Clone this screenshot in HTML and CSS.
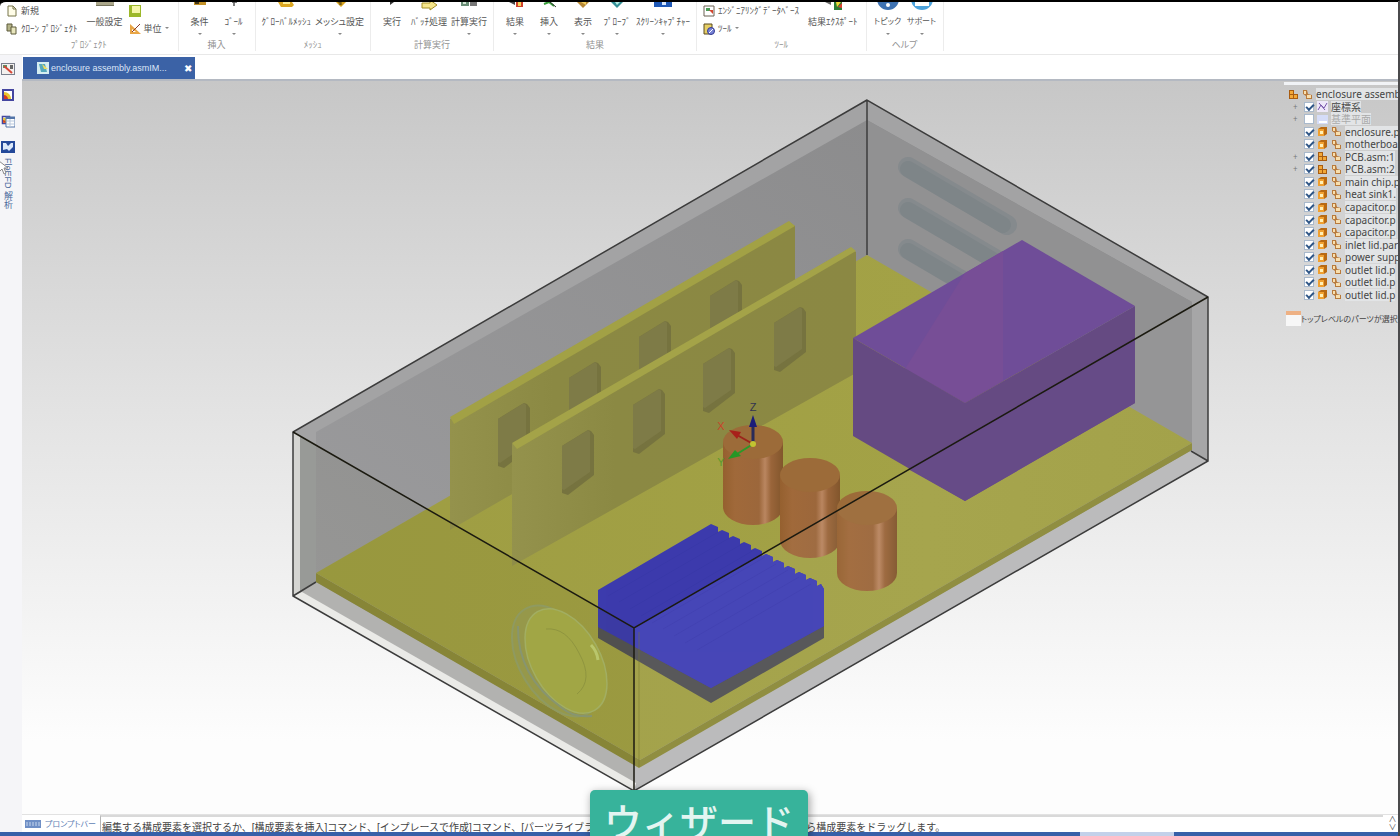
FILE: index.html
```
<!DOCTYPE html>
<html lang="ja">
<head>
  <meta charset="UTF-8">
  <meta name="viewport" content="width=device-width, initial-scale=1.0">
  <title>enclosure assembly</title>
  <link rel="stylesheet" href="styles.css">
</head>
<body>
  <svg class="defs" aria-hidden="true">
    <symbol id="part" viewBox="0 0 11 11"><path d="M1 3l3-2h6v7l-3 2H1z" fill="#b96a12"/><path d="M1 3h6v7H1z" fill="#f0a030"/><path d="M3 5h3v3H3z" fill="#fff0b8"/></symbol>
    <symbol id="asm" viewBox="0 0 11 11"><path d="M1 1h5v4h4v5H1z" fill="#a85c10"/><path d="M2 2h3v3H2zM2 6h3v3H2zM6 6h3v3H6z" fill="#f2a838"/></symbol>
    <symbol id="link" viewBox="0 0 11 11"><path d="M1 1h4l1 4 4 1v4H4V7L1 5z" fill="#b87a3c"/><path d="M2 2h2v3H2zM5 6h4v3H5z" fill="#f8dfae"/></symbol>
    <symbol id="chart" viewBox="0 0 14 14"><path d="M1 1h12v12H1z" fill="#4546a0"/><path d="M3 3h8v8H3z" fill="#fff"/><path d="M3 11V4c4 0 7 3 7 7z" fill="#e8c52c"/><path d="M3 11V7c2 0 4 2 4 4z" fill="#d33a22"/></symbol>
  </svg>

  <div class="app">
    <header class="ribbon">
      <section class="group">
        <div class="tools">
          <div class="stack">
            <button><svg class="icon" viewBox="0 0 12 12"><path d="M2 1h5l3 3v7H2z" fill="#fffde8" stroke="#77754a"/><path d="M7 1v3h3" fill="none" stroke="#77754a"/></svg>新規</button>
            <button><svg class="icon" viewBox="0 0 12 12"><path d="M1 1h5v7H1z" fill="#b5b489" stroke="#5c5b3b"/><path d="M5 4h5v7H5z" fill="#e8e6bd" stroke="#5c5b3b"/></svg>ｸﾛｰﾝ ﾌﾟﾛｼﾞｪｸﾄ</button>
          </div>
          <button class="big"><svg class="cut" viewBox="0 0 18 9"><path d="M0 0h18v4H0z" fill="#aaa68a"/><path d="M0 3h18v1H0z" fill="#77745d"/></svg>一般設定</button>
          <div class="stack">
            <button aria-label="表示"><svg class="icon" viewBox="0 0 12 12"><path d="M0 0h12v12H0z" fill="#9cb82a"/><path d="M3 1h8v7H3z" fill="#f4f6a8"/></svg></button>
            <button><svg class="icon" viewBox="0 0 12 12"><path d="M1 1v10h11z" fill="#e9a646"/><path d="M3 6v3h4z" fill="#fff"/><path d="M3 9l8-8" stroke="#8a3c2a"/></svg>単位<i class="arrow"></i></button>
          </div>
        </div>
        <h2>ﾌﾟﾛｼﾞｪｸﾄ</h2>
      </section>

      <section class="group">
        <div class="tools">
          <button class="big menu"><svg class="cut" viewBox="0 0 18 9"><path d="M3 0h12v3H3z" fill="#c39127"/><path d="M4 0h4v2H4z" fill="#443818"/></svg>条件</button>
          <button class="big menu"><svg class="cut" viewBox="0 0 18 9"><path d="M9 0v4M7 0h5" stroke="#555" stroke-width="1.5"/></svg>ｺﾞｰﾙ</button>
        </div>
        <h2>挿入</h2>
      </section>

      <section class="group">
        <div class="tools">
          <button class="big"><svg class="cut" viewBox="0 0 18 9"><path d="M1 0h14l2 3-2 2H4z" fill="#dca722"/><path d="M6 0h7v2H6z" fill="#fff09a"/></svg>ｸﾞﾛｰﾊﾞﾙﾒｯｼｭ</button>
          <button class="big menu"><svg class="cut" viewBox="0 0 18 9"><path d="M5 0h10l-5 5z" fill="#d4a01c"/><path d="M7 0h2v3M10 0v3" stroke="#574816" fill="none"/></svg>メッシュ設定</button>
        </div>
        <h2>ﾒｯｼｭ</h2>
      </section>

      <section class="group">
        <div class="tools">
          <button class="big"><svg class="cut" viewBox="0 0 18 9"><path d="M7 0h4L7 3z" fill="#333"/></svg>実行</button>
          <button class="big"><svg class="cut" viewBox="0 0 18 9"><path d="M2 1h8v-3l7 5-7 5V6H2z" fill="#f6e68c" stroke="#a38f27"/></svg>ﾊﾞｯﾁ処理</button>
          <button class="big menu"><svg class="cut" viewBox="0 0 18 9"><path d="M1 0h8v4H1z" fill="#698d76"/><path d="M10 0h7v4h-7z" fill="#777"/><path d="M3 0h3v2H3z" fill="#d4e4d4"/></svg>計算実行</button>
        </div>
        <h2>計算実行</h2>
      </section>

      <section class="group">
        <div class="tools">
          <button class="big menu"><svg class="cut" viewBox="0 0 18 9"><path d="M3 0h6v3z" fill="#444"/><path d="M10 0h7v5h-7z" fill="#cf402a"/><path d="M12 0h3v4h-3z" fill="#f4d25a"/></svg>結果</button>
          <button class="big menu"><svg class="cut" viewBox="0 0 18 9"><path d="M4 2l5-2 5 4" stroke="#379d39" stroke-width="2" fill="none"/><path d="M10 0l6 5" stroke="#333"/></svg>挿入</button>
          <button class="big menu"><svg class="cut" viewBox="0 0 18 9"><path d="M3 0h12l-6 6z" fill="#b68735"/><path d="M7 0h5v3z" fill="#f2cf60"/></svg>表示</button>
          <button class="big menu"><svg class="cut" viewBox="0 0 18 9"><path d="M3 0h12l-6 6z" fill="#348f96"/><path d="M7 0h5L9 3z" fill="#b9eee6"/></svg>ﾌﾟﾛｰﾌﾞ</button>
          <button class="big menu"><svg class="cut" viewBox="0 0 18 9"><path d="M0 0h18v5H0z" fill="#1e58b6"/><path d="M8 0h4v3H8z" fill="#d8e8ff"/></svg>ｽｸﾘｰﾝｷｬﾌﾟﾁｬｰ</button>
        </div>
        <h2>結果</h2>
      </section>

      <section class="group">
        <div class="tools">
          <div class="stack">
            <button><svg class="icon" viewBox="0 0 12 12"><path d="M1 1h10v10H1z" fill="#fff" stroke="#6b6152"/><path d="M3 3h4v3H3z" fill="#4a9b56"/><path d="M6 5h4v4z" fill="#d4442e"/></svg>ｴﾝｼﾞﾆｱﾘﾝｸﾞﾃﾞｰﾀﾍﾞｰｽ</button>
            <button><svg class="icon" viewBox="0 0 12 12"><path d="M1 1h8v10H1z" fill="#e6cf66" stroke="#5a4b1e"/><circle cx="8" cy="8" r="3.5" fill="#7883d6" stroke="#353b94"/><path d="M6 10l4-4" stroke="#fff"/></svg>ﾂｰﾙ<i class="arrow"></i></button>
          </div>
          <button class="big"><svg class="cut" viewBox="0 0 18 9"><path d="M1 0h6v3z" fill="#666"/><path d="M10 0h9v8h-9z" fill="#2b7b35"/><path d="M12 0h5l-4 5z" fill="#f0da36"/><path d="M14 5l4-4v5z" fill="#db432d"/></svg>結果ｴｸｽﾎﾟｰﾄ</button>
        </div>
        <h2>ﾂｰﾙ</h2>
      </section>

      <section class="group help">
        <div class="tools">
          <button class="big menu"><svg class="cut wide" viewBox="0 0 24 9"><circle cx="12" cy="-3" r="11" fill="#3e72b2"/><circle cx="12" cy="3" r="2" fill="#fff"/></svg>トピック</button>
          <button class="big menu"><svg class="cut wide" viewBox="0 0 24 9"><circle cx="12" cy="-3" r="11" fill="#4ba2dc"/><path d="M5 0h14v4H5z" fill="#fff"/></svg>サポート</button>
        </div>
        <h2>ヘルプ</h2>
      </section>
    </header>

    <div class="work">
      <nav class="dock">
        <button aria-label="モデル"><svg viewBox="0 0 14 14"><path d="M0 1h14v12H0z" fill="#7a7f8c"/><path d="M1 2h12v10H1z" fill="#f3f0ee"/><path d="M2 3h4v3H2z" fill="#4d9a6a"/><path d="M3 4l8 7" stroke="#d64637" stroke-width="2"/><path d="M9 3h3v4H9z" fill="#666"/></svg></button>
        <button aria-label="結果"><svg viewBox="0 0 14 14"><use href="#chart"/></svg></button>
        <button aria-label="一覧"><svg viewBox="0 0 14 14"><use href="#chart" width="10" height="12"/><path d="M5 3h9v10H5z" fill="#fff" stroke="#5274a8"/><path d="M5 4h9" stroke="#5274a8" stroke-width="2"/><path d="M6 7h7M6 10h7M9 5v8" stroke="#b9c8dd"/></svg></button>
        <button aria-label="解析"><svg viewBox="0 0 14 14"><path d="M0 1h14v12H0z" fill="#24499a"/><path d="M2 3h3l2 3 3-3h2v4L8 11l-2-2-4 1z" fill="#dbe8fa"/></svg></button>
        <a href="#">FloEFD 解析</a>
        <svg class="cursor" viewBox="0 0 10 15"><path d="M1 1v11l3-3 2 5 2-1-2-5h4z" fill="#fff" stroke="#888"/></svg>
      </nav>

      <main class="document">
        <div class="tabs">
          <div class="tab">
            <svg viewBox="0 0 12 12"><path d="M0 0h12v12H0z" fill="#d5edf1"/><path d="M2 2h6l2 8H4z" fill="#56a9bd"/><path d="M5 2l6 5H7z" fill="#eedb63"/></svg>
            <span>enclosure assembly.asmIM...</span>
            <button aria-label="閉じる">✖</button>
          </div>
        </div>

        <div class="view">
          <svg class="scene" viewBox="22 81 1376 733" role="img" aria-label="enclosure assembly">
            <defs>
              <linearGradient id="wall" x1="1" x2="0" y1="0" y2="1"><stop offset="0" stop-color="#888889"/><stop offset="1" stop-color="#9e9ea0"/></linearGradient>
              <linearGradient id="base" x1="0" x2="1"><stop offset="0" stop-color="#9e9d42"/><stop offset=".7" stop-color="#a3a246"/><stop offset="1" stop-color="#a09f43"/></linearGradient>
              <linearGradient id="pcb" x1="0" x2="1"><stop offset="0" stop-color="#94924c"/><stop offset=".3" stop-color="#8b8943"/><stop offset="1" stop-color="#8b8843"/></linearGradient>
              <linearGradient id="copper" x1="0" x2="1"><stop offset="0" stop-color="#95602f"/><stop offset=".2" stop-color="#a0693a"/><stop offset=".6" stop-color="#9c673b"/><stop offset=".7" stop-color="#ba8660"/><stop offset=".8" stop-color="#9a653a"/><stop offset="1" stop-color="#82562c"/></linearGradient>
              <clipPath id="sink"><path d="M598 590L711 524l7 3 0 5 4-2 7 3 0 5 4-2 7 3 0 5 4-2 7 3 0 5 4-2 7 3 0 5 4-2 7 3 0 5 4-2 7 3 0 5 4-2 7 3 0 5 4-2 7 3 0 5 4-2 7 3 0 5 4-2 3 5V626L711 688L598 627z"/></clipPath>
              <g id="chip"><path d="M562 446l26-16 3 1 3 4v40l-26 20-6-2z" fill="#76733f"/><path d="M562 446l26-16 2 2v40l-26 18-2-1z" fill="#7e7b47"/></g>
              <g id="can"><path d="M723 442v65a30 18 0 0 0 60 0v-65z" fill="url(#copper)"/><ellipse cx="753" cy="442" rx="30" ry="17" fill="#9c6b39"/></g>
              <g id="slot"><path d="M908 167l99 58" stroke="#858a8d" stroke-width="20" stroke-linecap="round"/><path d="M908 169l95 56" stroke="#7e8588" stroke-width="16" stroke-linecap="round"/></g>
            </defs>

            <!-- enclosure shell -->
            <path d="M867 100L293 432V596L634 791L1208 461V297z" fill="#a3a3a4"/>
            <path d="M867 120L316 432V582L639 767L1192 450V302z" fill="url(#wall)"/>
            <path d="M867 120V264L1192 450V302z" fill="#919192"/>
            <path d="M293 432l7 4v160l-7 0z" fill="#dedede"/>
            <path d="M300 436l16 9v138l-16 9z" fill="#9da0a0"/>
            <path d="M293 596L316 582L639 767L1192 450L1208 461L634 791z" fill="#b9b9ba"/>
            <path d="M293 596l9-4l334 191l-2 8z" fill="#f4f4f4"/>
            <use href="#slot"/><use href="#slot" y="41"/><use href="#slot" y="82"/>

            <!-- motherboard -->
            <path d="M316 573L640 760L1192 443V450L639 768L316 582z" fill="#8c8a3a"/>
            <path d="M867 255L316 573L640 760L1192 443z" fill="url(#base)"/>

            <!-- pcb 1 and 2 -->
            <path d="M450 419L789 222L795 226V330L450 530z" fill="url(#pcb)"/>
            <path d="M450 417L789 221L795 226L454 424z" fill="#a2a145"/>
            <g transform="translate(-64 -27)"><use href="#chip"/><use href="#chip" x="71" y="-41"/><use href="#chip" x="141" y="-82"/><use href="#chip" x="212" y="-123"/></g>
            <path d="M512 444L850 248L856 252V373L512 566z" fill="url(#pcb)"/>
            <path d="M512 443L851 247L856 251L517 449z" fill="#a4a348"/>
            <use href="#chip"/><use href="#chip" x="71" y="-41"/><use href="#chip" x="141" y="-82"/><use href="#chip" x="212" y="-123"/>

            <!-- power supply -->
            <path d="M853 338L1022 240L1135 306L965 403z" fill="#6f4d98"/>
            <path d="M1003 251L1003 381L965 403L905 369L965 273z" fill="#774e96"/>
            <path d="M853 338L965 403L1135 306V403L965 501L853 436z" fill="#654a82"/>
            <path d="M1135 339V403L965 501L908 469z" fill="#604483"/>

            <!-- capacitors -->
            <use href="#can"/><use href="#can" x="57" y="33"/><use href="#can" x="114" y="66"/>

            <!-- main chip and heat sink -->
            <path d="M598 626L711 686L824 624V638L711 703L598 638z" fill="#525254"/>
            <g clip-path="url(#sink)">
              <path d="M590 520h240v170H590z" fill="#3c3bad"/>
              <path d="M634 628L840 509V690H634z" fill="#403fb5"/>
              <path d="M720 531l-112 65M731 537l-112 65M742 544l-112 65M754 550l-113 66M765 557l-113 66M776 564l-113 65M788 570l-114 66M799 577l-114 66M811 584l-114 66" stroke="#3635a2" opacity=".35"/>
            </g>

            <!-- front faces -->
            <path d="M293 432L634 628V791L293 596z" fill="#3d3d00" opacity=".05"/>
            <path d="M634 628L1208 297V461L634 791z" fill="#fff" opacity=".04"/>

            <!-- inlet lid -->
            <ellipse cx="557" cy="661" rx="61" ry="37" transform="rotate(58 557 661)" fill="#96984a" stroke="#8f9a60" stroke-width="2"/>
            <ellipse cx="566" cy="661" rx="57" ry="34" transform="rotate(60 566 661)" fill="#a1a645" stroke="#a2ae62" stroke-width="1.5"/>
            <path d="M518 626q-1 50 44 82q12 10 30 8" fill="none" stroke="#879570" stroke-width="2"/>
            <path d="M546 629q20-2 33 24q15 27-2 41" fill="none" stroke="#8f953f"/>
            <path d="M591 645q6 6 7 15" fill="none" stroke="#b9c66c" stroke-width="3"/>

            <!-- edges -->
            <path d="M867 100L293 432V596L634 791L1208 461V297zM867 100V255M293 596l23-14M1208 461l-17-10" fill="none" stroke="#3c3c3c" stroke-width="1.5"/>
            <path d="M293 432L634 628L1208 297M634 628V791" fill="none" stroke="#1b1a10" stroke-width="1.5"/>
            <path d="M639 632V767" stroke="#77762f" opacity=".5"/>

            <!-- axes -->
            <path d="M753 444V424" stroke="#292b59" stroke-width="3"/><path d="M749 427l4-12 4 12z" fill="#1c1d7a"/>
            <path d="M753 444l-16-9" stroke="#9c231b" stroke-width="2"/><path d="M729 430l12 2-4 7z" fill="#a8201a"/>
            <path d="M753 444l-16 10" stroke="#2a9929" stroke-width="2"/><path d="M728 459l7-9 6 6z" fill="#259726"/>
            <circle cx="753" cy="444" r="3" fill="#c2c331"/>
            <text class="axis" x="753" y="411" fill="#33344f">Z</text>
            <text class="axis" x="721" y="430" fill="#c8442a">X</text>
            <text class="axis" x="721" y="466" fill="#5a9a2b">Y</text>
          </svg>

          <aside class="tree">
            <ul>
              <li class="root"><svg><use href="#asm"/></svg><svg><use href="#link"/></svg><span>enclosure assemb</span></li>
              <li><button aria-label="展開">+</button><label><input type="checkbox" checked><svg viewBox="0 0 11 11"><path d="M0 0h11v11H0z" fill="#eee8fa"/><path d="M1 9l3-5 3 3 3-5M2 2l6 7" stroke="#7755aa" fill="none"/></svg><span>座標系</span></label></li>
              <li class="off"><button aria-label="展開">+</button><label><input type="checkbox"><svg viewBox="0 0 11 11"><path d="M0 1h11v9H0z" fill="#d5dcf8"/><path d="M2 7h8v2H2z" fill="#fff"/></svg><span>基準平面</span></label></li>
              <li><label><input type="checkbox" checked><svg><use href="#part"/></svg><svg><use href="#link"/></svg><span>enclosure.p</span></label></li>
              <li><label><input type="checkbox" checked><svg><use href="#part"/></svg><svg><use href="#link"/></svg><span>motherboa</span></label></li>
              <li><button aria-label="展開">+</button><label><input type="checkbox" checked><svg><use href="#asm"/></svg><svg><use href="#link"/></svg><span>PCB.asm:1</span></label></li>
              <li><button aria-label="展開">+</button><label><input type="checkbox" checked><svg><use href="#asm"/></svg><svg><use href="#link"/></svg><span>PCB.asm:2</span></label></li>
              <li><label><input type="checkbox" checked><svg><use href="#part"/></svg><svg><use href="#link"/></svg><span>main chip.p</span></label></li>
              <li><label><input type="checkbox" checked><svg><use href="#part"/></svg><svg><use href="#link"/></svg><span>heat sink1.</span></label></li>
              <li><label><input type="checkbox" checked><svg><use href="#part"/></svg><svg><use href="#link"/></svg><span>capacitor.p</span></label></li>
              <li><label><input type="checkbox" checked><svg><use href="#part"/></svg><svg><use href="#link"/></svg><span>capacitor.p</span></label></li>
              <li><label><input type="checkbox" checked><svg><use href="#part"/></svg><svg><use href="#link"/></svg><span>capacitor.p</span></label></li>
              <li><label><input type="checkbox" checked><svg><use href="#part"/></svg><svg><use href="#link"/></svg><span>inlet lid.par</span></label></li>
              <li><label><input type="checkbox" checked><svg><use href="#part"/></svg><svg><use href="#link"/></svg><span>power supp</span></label></li>
              <li><label><input type="checkbox" checked><svg><use href="#part"/></svg><svg><use href="#link"/></svg><span>outlet lid.p</span></label></li>
              <li><label><input type="checkbox" checked><svg><use href="#part"/></svg><svg><use href="#link"/></svg><span>outlet lid.p</span></label></li>
              <li><label><input type="checkbox" checked><svg><use href="#part"/></svg><svg><use href="#link"/></svg><span>outlet lid.p</span></label></li>
            </ul>
            <p><svg viewBox="0 0 15 15"><path d="M0 0h15v15H0z" fill="#f7f7f7"/><path d="M0 0h15v4H0z" fill="#eeb184"/></svg>トップレベルのパーツが選択</p>
          </aside>
        </div>

        <div class="prompt">
          <svg viewBox="0 0 16 8"><path d="M0 0h16v8H0z" fill="#6f8fc6"/><path d="M1 3h14M1 5h14" stroke="#c9d8ef" stroke-dasharray="2 1"/></svg>
          <label for="prompt">プロンプトバー</label>
          <input id="prompt" type="text" readonly value="編集する構成要素を選択するか、[構成要素を挿入]コマンド、[インプレースで作成]コマンド、[パーツライブラリ]コマンドを使用するか、パーツウィンドウから構成要素をドラッグします。">
          <div class="spin"><button aria-label="上">∧</button><button aria-label="下">∨</button></div>
        </div>
      </main>
    </div>
    <footer class="taskbar"><span></span></footer>
    <div class="caption">ウィザード</div>
  </div>
</body>
</html>
```
FILE: styles.css
```
*{
  box-sizing: border-box;
}
body{
  margin: 0;
  background-color: #000;
  color: #555;
  font-family: "Liberation Sans", "Noto Sans CJK JP", sans-serif;
  font-size: 9px;
}
button{
  border: none;
  padding: 0;
  background-color: transparent;
  color: inherit;
  font: inherit;
  cursor: pointer;
}
svg{
  display: block;
  flex: none;
}
.defs{
  position: absolute;
  width: 0;
  height: 0;
}
.app{
  position: relative;
  display: flex;
  flex-direction: column;
  height: 100vh;
  border-top: 2px solid #000;
  border-right: 2px solid #4a4a4c;
  border-radius: 6px 0 0 0;
  background-color: #fff;
  overflow: hidden;
}

/* ribbon */
.ribbon{
  display: flex;
  height: 53px;
  border-bottom: 1px solid #e8e8e8;
  font-feature-settings: "palt";
}
.group{
  display: flex;
  flex-direction: column;
  justify-content: space-between;
  height: 49px;
  padding: 0 4px;
  border-right: 1px solid #ececec;
}
.group h2{
  margin: 0;
  color: #929292;
  font-size: 9px;
  font-weight: normal;
  line-height: 12px;
  text-align: center;
}
.tools{
  display: flex;
}
.stack{
  display: flex;
  flex-direction: column;
  gap: 6px;
  padding: 3px 5px 2px 2px;
}
.stack button{
  display: flex;
  align-items: center;
  gap: 3px;
  height: 12px;
  line-height: 12px;
  white-space: nowrap;
}
.icon{
  width: 12px;
  height: 12px;
}
.big{
  display: flex;
  flex-direction: column;
  align-items: center;
  gap: 5px;
  min-width: 34px;
  padding: 0 2px;
  line-height: 12px;
  white-space: nowrap;
}
.stack + .big{
  padding: 0 4px;
}
.help{
  font-size: 8px;
}
.help .big{
  font-size: 8px;
}
.menu::after, .arrow{
  content: "";
  border: 2px solid transparent;
  border-top-color: #888;
}
.cut{
  width: 18px;
  height: 9px;
}
.wide{
  width: 24px;
}

/* left dock */
.work{
  display: flex;
  flex: 1;
  min-height: 0;
}
.dock{
  position: relative;
  display: flex;
  flex-direction: column;
  align-items: flex-start;
  gap: 12px;
  width: 22px;
  padding-top: 7px;
  padding-left: 1px;
  background-color: #f5f5f8;
}
.dock button svg{
  width: 14px;
  height: 14px;
}
.dock a{
  margin-top: -8px;
  color: #4c6a9c;
  font-size: 9px;
  line-height: 14px;
  text-decoration: none;
  writing-mode: vertical-rl;
}
.cursor{
  position: absolute;
  top: 105px;
  left: -2px;
  width: 10px;
  height: 15px;
}

/* document */
.document{
  display: flex;
  flex: 1;
  flex-direction: column;
  min-width: 0;
}
.tabs{
  padding: 2px 1px 0;
  border-bottom: 2px solid #b4b9c2;
}
.tab{
  display: flex;
  align-items: center;
  gap: 2px;
  width: 172px;
  height: 22px;
  padding: 0 3px 0 14px;
  background-color: #3b62a6;
  color: #dbe6f7;
}
.tab svg{
  width: 12px;
  height: 12px;
}
.tab span{
  flex: 1;
  white-space: nowrap;
}
.tab button{
  color: #fff;
  font-size: 10px;
}
.view{
  position: relative;
  flex: 1;
  min-height: 0;
  background: linear-gradient(#c7c7c7, #e3e3e3 45%, #fdfdfd 90%);
  overflow: hidden;
}
.scene{
  width: 100%;
  height: 100%;
}
.axis{
  font-size: 11px;
  text-anchor: middle;
}

/* part tree */
.tree{
  position: absolute;
  top: 1px;
  right: 0;
  width: 114px;
  border-top: 3px solid #f1f3f6;
  color: #444;
  font-family: "Noto Sans", "Noto Sans CJK JP", sans-serif;
  font-size: 10px;
  white-space: nowrap;
}
.tree ul{
  display: grid;
  grid-auto-rows: 1fr;
  height: 213px;
  margin: 3px 0 0;
  padding: 0;
  list-style: none;
}
.tree li, .tree label{
  display: flex;
  flex: 1;
  align-items: center;
  gap: 3px;
  line-height: 12px;
}
.tree li{
  position: relative;
  padding-left: 20px;
}
.tree .root{
  padding-left: 4px;
}
.tree li button{
  position: absolute;
  left: 9px;
  color: #777;
  font-size: 8px;
  line-height: 10px;
}
.tree li svg{
  width: 11px;
  height: 11px;
}
.tree li span{
  background-color: #e2e4e6;
}
.tree .off{
  color: #aaa;
}
.tree input{
  appearance: none;
  flex: none;
  width: 10px;
  height: 10px;
  margin: 0;
  border: 1px solid #a9b9cc;
  background-color: #fff;
}
.tree input:checked::before{
  content: "";
  display: block;
  width: 6px;
  height: 3px;
  margin: 1px;
  border-left: 2px solid #2f5687;
  border-bottom: 2px solid #2f5687;
  transform: rotate(-45deg);
}
.tree p{
  display: flex;
  align-items: center;
  margin: 10px 0 0 2px;
  font-size: 8px;
  font-feature-settings: "palt";
}
.tree p svg{
  width: 15px;
  height: 15px;
}

/* prompt bar */
.prompt{
  display: flex;
  align-items: center;
  gap: 4px;
  height: 18px;
  padding-left: 3px;
  border-top: 1px solid #e2e2e2;
}
.prompt svg{
  width: 16px;
  height: 8px;
}
.prompt label{
  color: #5f7fb5;
  font-size: 8px;
  font-feature-settings: "palt";
}
.prompt input{
  flex: 1;
  height: 17px;
  min-width: 0;
  padding: 3px 0 0 1px;
  border: none;
  border-top: 2px solid #d9d9d9;
  border-left: 1px solid #b5b5b5;
  color: #444;
  font: inherit;
  font-size: 10px;
}
.spin{
  display: flex;
  flex-direction: column;
  width: 11px;
}
.spin button{
  font-size: 8px;
  line-height: 8px;
}
.taskbar{
  display: flex;
  justify-content: flex-end;
  height: 4px;
  padding-right: 16%;
  background-color: #3760a8;
}
.taskbar span{
  width: 8%;
  background-color: #c3d1ea;
}

/* video caption */
.caption{
  position: absolute;
  left: 50%;
  bottom: -20px;
  padding: 0 14px;
  border-radius: 5px;
  background-color: #37b39b;
  box-shadow: 2px 2px 8px rgba(0,0,0,.35);
  color: #e3f5f1;
  font-size: 38px;
  font-weight: 500;
  line-height: 66px;
  transform: translateX(-50%);
}
```
